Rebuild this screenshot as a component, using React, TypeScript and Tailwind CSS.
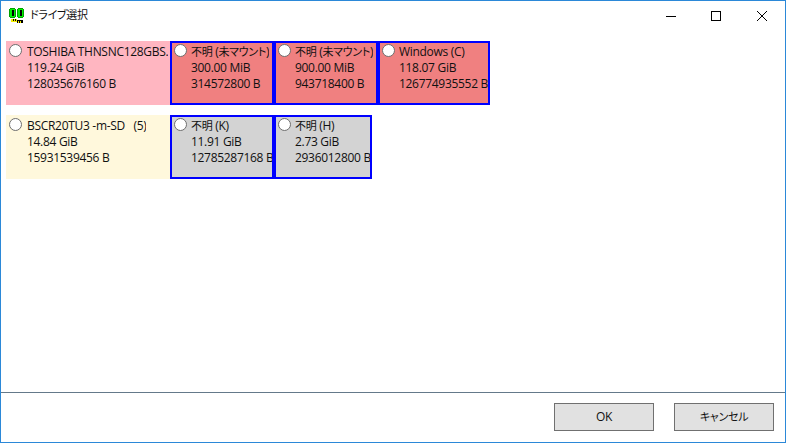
import type { ReactNode } from 'react';

type Drive = { title: ReactNode; size: string; bytes: string };

const font = { fontFamily: '"Open Sans", "Noto Sans CJK JP", sans-serif' };

function Ja({ children }: { children: ReactNode }) {
  return <span className="text-[11px]">{children}</span>;
}

function Radio() {
  return <span className="block w-[13px] h-[13px] shrink-0 rounded-full bg-white border border-[#6e6e6e]" />;
}

function Info({ title, size, bytes }: Drive) {
  return (
    <div className="text-[12px] leading-[16px] tracking-[-0.3px] text-[#111] whitespace-pre overflow-hidden [font-feature-settings:'palt']">
      <div>{title}</div>
      <div>{size}</div>
      <div>{bytes}</div>
    </div>
  );
}

function DiskCell({ title, size, bytes, bg }: Drive & { bg: string }) {
  return (
    <div className={`${bg} w-[164px] h-[64px] flex pl-[3px] pt-[3px] gap-[5px] overflow-hidden`}>
      <Radio />
      <Info title={title} size={size} bytes={bytes} />
    </div>
  );
}

function Partition({ title, size, bytes, width, bg }: Drive & { width: string; bg: string }) {
  return (
    <div className={`${width} ${bg} h-[64px] border-2 border-[#0000ff] flex pl-[2px] pt-[1px] gap-[4px] overflow-hidden`}>
      <Radio />
      <Info title={title} size={size} bytes={bytes} />
    </div>
  );
}

function AppIcon() {
  return (
    <svg width="16" height="16" viewBox="0 0 16 16" shapeRendering="crispEdges" className="shrink-0 mt-[1px]">
      <path d="M1 0h5v1h1v8H6v1H1V9H0V1h1z" fill="#00a000" />
      <path d="M9 0h5v1h1v8h-1v1H9V9H8V1h1z" fill="#00a000" />
      <path d="M1 1h5v8H1z" fill="#00f000" />
      <path d="M9 1h5v8H9z" fill="#00f000" />
      <rect x="3" y="2" width="2" height="6" fill="#000" />
      <rect x="11" y="2" width="2" height="6" fill="#000" />
      <rect x="2" y="11" width="6" height="3" fill="#f4f000" />
      <rect x="4" y="11" width="1" height="2" fill="#000" />
      <rect x="6" y="11" width="1" height="2" fill="#000" />
      <rect x="8" y="12" width="6" height="3" fill="#000" />
      <rect x="9" y="13" width="1" height="2" fill="#f4f000" />
      <rect x="11" y="13" width="1" height="2" fill="#f4f000" />
    </svg>
  );
}

function DialogButton({ label, ja }: { label: string; ja?: boolean }) {
  return (
    <button className="w-[100px] h-[28px] bg-[#e1e1e1] border border-[#707070] text-[12px] tracking-[-0.3px] text-[#111] [font-feature-settings:'palt']">
      {ja ? <Ja>{label}</Ja> : label}
    </button>
  );
}

export default function App() {
  return (
    <div style={font} className="w-[786px] h-[443px] bg-white border border-[#2b88d8] flex flex-col overflow-hidden">
      {/* Title bar */}
      <div className="h-[29px] shrink-0 flex items-center pl-[8px]">
        <AppIcon />
        <span className="ml-[5px] text-[11px] tracking-[-0.3px] text-[#111] [font-feature-settings:'palt']">ドライブ選択</span>
        <div className="ml-auto flex items-center">
          <div className="w-[44px] flex justify-center">
            <svg width="10" height="10" viewBox="0 0 10 10" shapeRendering="crispEdges">
              <path d="M0 5h10v1H0z" fill="#000" />
            </svg>
          </div>
          <div className="w-[46px] flex justify-center">
            <svg width="10" height="10" viewBox="0 0 10 10" shapeRendering="crispEdges">
              <path d="M.5.5h9v9h-9z" fill="none" stroke="#000" />
            </svg>
          </div>
          <div className="w-[46px] flex justify-center">
            <svg width="10" height="10" viewBox="0 0 10 10">
              <path d="M0 0l10 10M10 0L0 10" fill="none" stroke="#000" />
            </svg>
          </div>
        </div>
      </div>

      {/* Drive list */}
      <div className="h-[362px] shrink-0 pl-[5px] pt-[11px] flex flex-col gap-[10px]">
        <div className="flex">
          <DiskCell title="TOSHIBA THNSNC128GBS." size="119.24 GiB" bytes="128035676160 B" bg="bg-[#ffb6c1]" />
          <Partition title={<><Ja>不明</Ja> (<Ja>未マウント</Ja>)</>} size="300.00 MiB" bytes="314572800 B" width="w-[104px]" bg="bg-[#f08080]" />
          <Partition title={<><Ja>不明</Ja> (<Ja>未マウント</Ja>)</>} size="900.00 MiB" bytes="943718400 B" width="w-[104px]" bg="bg-[#f08080]" />
          <Partition title="Windows (C)" size="118.07 GiB" bytes="126774935552 B" width="w-[112px]" bg="bg-[#f08080]" />
        </div>
        <div className="flex">
          <DiskCell title="BSCR20TU3 -m-SD   (5)" size="14.84 GiB" bytes="15931539456 B" bg="bg-[#fff8dc]" />
          <Partition title={<><Ja>不明</Ja> (K)</>} size="11.91 GiB" bytes="12785287168 B" width="w-[104px]" bg="bg-[#d3d3d3]" />
          <Partition title={<><Ja>不明</Ja> (H)</>} size="2.73 GiB" bytes="2936012800 B" width="w-[98px]" bg="bg-[#d3d3d3]" />
        </div>
      </div>

      {/* Footer */}
      <div className="flex-1 border-t border-[#64798a] flex justify-end items-start pt-[10px] pr-[11px] gap-[20px]">
        <DialogButton label="OK" />
        <DialogButton label="キャンセル" ja />
      </div>
    </div>
  );
}
